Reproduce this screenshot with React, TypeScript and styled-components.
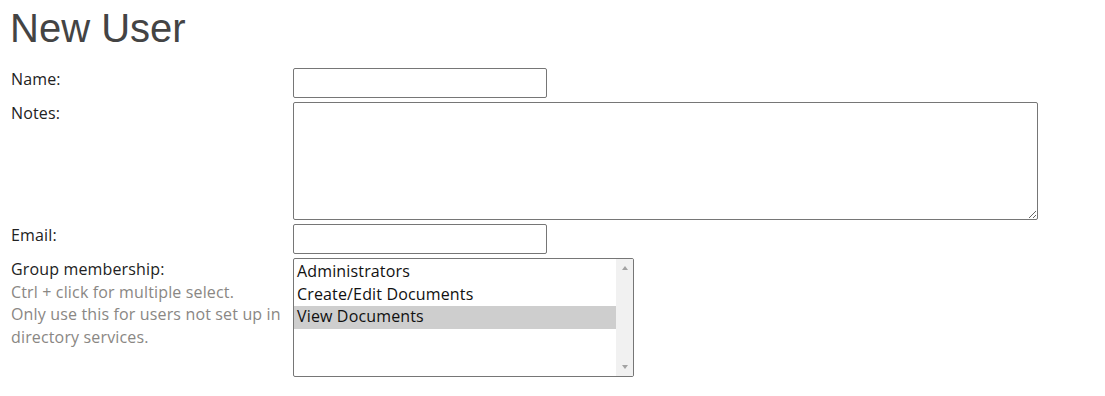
import styled, { createGlobalStyle } from "styled-components";

const GlobalStyle = createGlobalStyle`
  body {
    margin: 0;
    background: #fff;
    font-family: "Open Sans", "Liberation Sans", sans-serif;
    color: #222;
  }
`;

const groups = ["Administrators", "Create/Edit Documents", "View Documents"];

export default function App() {
  return (
    <>
      <GlobalStyle />
      <StPage>
        <StTitle>New User</StTitle>
        <StForm>
          <StLabel>Name:</StLabel>
          <StInput type="text" />

          <StLabel>Notes:</StLabel>
          <StTextArea />

          <StLabel>Email:</StLabel>
          <StInput type="text" />

          <StLabel>
            Group membership:
            <StHint>Ctrl + click for multiple select.</StHint>
            <StHint>Only use this for users not set up in directory services.</StHint>
          </StLabel>
          <StListBox role="listbox" aria-multiselectable="true">
            <StOptions>
              {groups.map((g) => (
                <StOption key={g} $selected={g === "View Documents"}>
                  {g}
                </StOption>
              ))}
            </StOptions>
            <StScrollTrack>
              <StArrow $up />
              <StArrow />
            </StScrollTrack>
          </StListBox>
        </StForm>
      </StPage>
    </>
  );
}

const StPage = styled.main`
  padding: 5px 8px 5px 11px;
`;

const StTitle = styled.h1`
  margin: 0 0 17px -1px;
  font-family: "Liberation Sans", Arial, sans-serif;
  font-size: 40px;
  font-weight: 400;
  line-height: 46px;
  color: #444;
`;

const StForm = styled.div`
  display: grid;
  grid-template-columns: 282px auto;
  justify-content: start;
  row-gap: 4px;
`;

const StLabel = styled.label`
  font-size: 16px;
  line-height: 22.5px;
  letter-spacing: 0.15px;
  color: #222;
  padding-right: 2px;
`;

const StHint = styled.span`
  display: block;
  color: #8a8784;
`;

const StInput = styled.input`
  box-sizing: border-box;
  width: 254px;
  height: 30px;
  margin: 0;
  border: 1px solid #767676;
  border-radius: 2px;
  font: 16px "Open Sans", sans-serif;
`;

const StTextArea = styled.textarea`
  box-sizing: border-box;
  width: 745px;
  height: 118px;
  margin: 0;
  border: 1px solid #767676;
  border-radius: 2px;
  font: 16px "Open Sans", sans-serif;
`;

const StListBox = styled.div`
  box-sizing: border-box;
  width: 341px;
  height: 119px;
  display: flex;
  border: 1px solid #767676;
  border-radius: 2px;
  overflow: hidden;
`;

const StOptions = styled.div`
  flex: 1;
  padding-top: 2px;
`;

const StOption = styled.div<{ $selected?: boolean }>`
  height: 22.5px;
  padding: 0 3px;
  font-size: 16px;
  line-height: 21.5px;
  letter-spacing: 0.15px;
  color: #111;
  background: ${({ $selected }) => ($selected ? "#cecece" : "transparent")};
`;

const StScrollTrack = styled.div`
  width: 17px;
  background: #f1f1f1;
  display: flex;
  flex-direction: column;
  justify-content: space-between;
  align-items: center;
  padding: 7px 0;
`;

const StArrow = styled.span<{ $up?: boolean }>`
  width: 0;
  height: 0;
  border-left: 3.5px solid transparent;
  border-right: 3.5px solid transparent;
  ${({ $up }) =>
    $up ? "border-bottom: 4px solid #a3a3a3;" : "border-top: 4px solid #a3a3a3;"}
`;
